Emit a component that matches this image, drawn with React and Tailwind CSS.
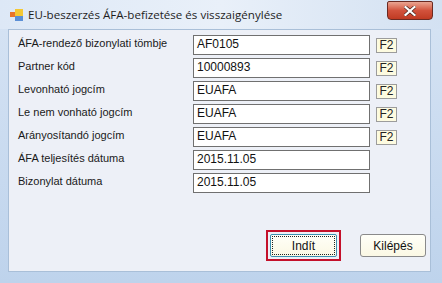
import React from 'react';

const rows = [
  { label: 'ÁFA-rendező bizonylati tömbje', value: 'AF0105', f2: true },
  { label: 'Partner kód', value: '10000893', f2: true },
  { label: 'Levonható jogcím', value: 'EUAFA', f2: true },
  { label: 'Le nem vonható jogcím', value: 'EUAFA', f2: true },
  { label: 'Arányosítandó jogcím', value: 'EUAFA', f2: true },
  { label: 'ÁFA teljesítés dátuma', value: '2015.11.05', f2: false },
  { label: 'Bizonylat dátuma', value: '2015.11.05', f2: false },
];

const AppIcon = () => (
  <svg width="13" height="12" viewBox="0 0 13 12">
    <rect x="0" y="3" width="5" height="5" fill="#e8742a" />
    <rect x="5" y="0" width="8" height="7" fill="#f4c834" />
    <rect x="5" y="7" width="8" height="5" fill="#5b8fd6" />
  </svg>
);

export default function App() {
  return (
    <div
      className="w-[442px] h-[283px] overflow-hidden flex flex-col bg-gradient-to-b from-[#d7e4f4] to-[#bed3ec] text-black"
      style={{ fontFamily: '"Liberation Sans", Arial, sans-serif' }}
    >
      {/* title bar */}
      <div className="h-[29px] flex items-start pl-[10px] bg-gradient-to-r from-[#dde8f6] via-[#e9f0f9] to-[#d3e1f2]">
        <div className="mt-[9px]"><AppIcon /></div>
        <div
          className="ml-[5px] mt-[6px] text-[11.6px] text-[#1e1e1e]"
          style={{ fontFamily: '"Open Sans", "Noto Sans", sans-serif' }}
        >
          EU-beszerzés ÁFA-befizetése és visszaigénylése
        </div>
        <div className="ml-auto mr-[9px] mt-[1px] w-[46px] h-[19px] rounded-b-[4px] rounded-t-[2px] border border-[#6b2a22] bg-gradient-to-b from-[#e9a592] via-[#d2523c] to-[#c03a22] flex items-center justify-center">
          <svg width="12" height="10" viewBox="0 0 12 10">
            <path d="M1.5 1 L10.5 9 M10.5 1 L1.5 9" stroke="#3a1a14" strokeWidth="3.4" strokeLinecap="square" />
            <path d="M1.5 1 L10.5 9 M10.5 1 L1.5 9" stroke="#ffffff" strokeWidth="2.2" strokeLinecap="square" />
          </svg>
        </div>
      </div>

      {/* client area */}
      <div className="ml-[8px] mr-[11px] h-[243px] bg-[#edf0f7] border border-[#a9bfd8] flex flex-col pt-[5px] pl-[9px]">
        <div className="flex flex-col gap-[3px]">
          {rows.map((r) => (
            <div key={r.label} className="flex items-start h-[20px]">
              <div className="w-[175px] text-[11px] leading-[14px] pt-[1px] text-[#1a1a1a]">{r.label}</div>
              <div className="w-[177px] h-[20px] border border-[#707070] bg-white pl-[3px] text-[12px] leading-[17px] text-[#111]">
                {r.value}
              </div>
              {r.f2 && (
                <div className="ml-[6px] mt-[3px] w-[21px] h-[15px] border border-[#9c9c9c] bg-[#fdfbe0] text-[12px] leading-[13px] text-center text-[#222]">
                  F2
                </div>
              )}
            </div>
          ))}
        </div>

        <div className="mt-auto mb-[10px] flex items-center justify-end pr-[4px] gap-[19px]">
          <div className="border-2 border-[#c4102a] p-[2px]">
            <div className="w-[67px] h-[23px] rounded-[2px] border border-[#3c8fb0] bg-gradient-to-b from-[#fffff8] to-[#fbf8e4] p-[1px]">
              <div className="w-full h-full border border-dotted border-[#222] flex items-center justify-center text-[12px] text-[#111]">
                Indít
              </div>
            </div>
          </div>
          <div className="w-[66px] h-[23px] rounded-[3px] border border-[#8a8a8a] bg-gradient-to-b from-[#fffff8] to-[#fbf8e4] flex items-center justify-center text-[12px] text-[#111]">
            Kilépés
          </div>
        </div>
      </div>
    </div>
  );
}
